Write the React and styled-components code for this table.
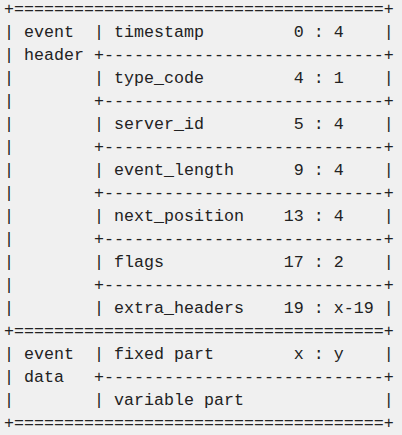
import React from "react";
import styled, { createGlobalStyle } from "styled-components";

const Global = createGlobalStyle`
  html, body { margin: 0; padding: 0; background: #f0f0f0; }
  body { width: 402px; height: 435px; overflow: hidden; }
`;

const Page = styled.div`
  display: flex;
  flex-direction: column;
  padding: 0 0 0 4px;
  margin-top: -2px;
  background: #f0f0f0;
`;

const Diagram = styled.pre`
  margin: 0;
  font-family: "Liberation Mono", "Courier New", monospace;
  font-size: 16.667px;
  line-height: 23px;
  color: #222222;
  white-space: pre;
`;

const lines = [
  "+=====================================+",
  "| event  | timestamp         0 : 4    |",
  "| header +----------------------------+",
  "|        | type_code         4 : 1    |",
  "|        +----------------------------+",
  "|        | server_id         5 : 4    |",
  "|        +----------------------------+",
  "|        | event_length      9 : 4    |",
  "|        +----------------------------+",
  "|        | next_position    13 : 4    |",
  "|        +----------------------------+",
  "|        | flags            17 : 2    |",
  "|        +----------------------------+",
  "|        | extra_headers    19 : x-19 |",
  "+=====================================+",
  "| event  | fixed part        x : y    |",
  "| data   +----------------------------+",
  "|        | variable part              |",
  "+=====================================+",
];

export default function App() {
  return (
    <Page>
      <Global />
      <Diagram>{lines.join("\n")}</Diagram>
    </Page>
  );
}
